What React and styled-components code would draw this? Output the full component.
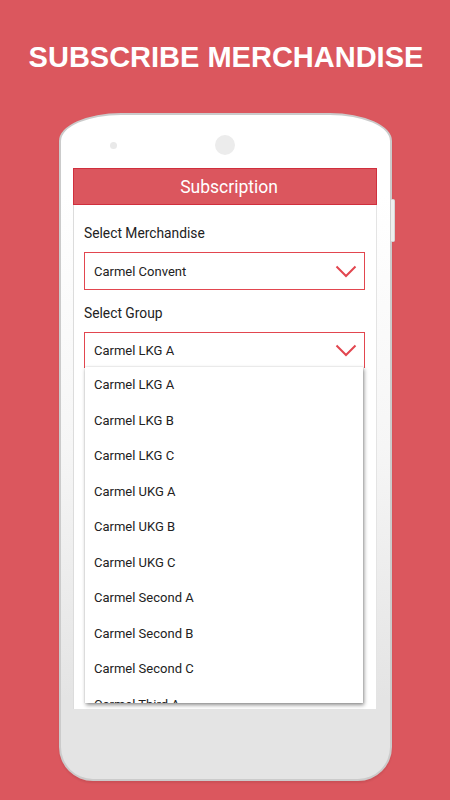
import React from "react";
import styled, { createGlobalStyle } from "styled-components";

const Global = createGlobalStyle`
  html, body { margin: 0; padding: 0; background: #db575e; }
  * { box-sizing: border-box; }
`;

const Page = styled.div`
  width: 450px;
  height: 800px;
  overflow: hidden;
  background: #db575e;
  display: flex;
  flex-direction: column;
  align-items: center;
`;

const Title = styled.h1`
  margin: 43px 0 0 2px;
  font-family: "Liberation Sans", Arial, sans-serif;
  font-weight: 700;
  font-size: 29px;
  line-height: 29px;
  color: #fff;
`;

const Phone = styled.div`
  position: relative;
  margin-top: 41px;
  margin-left: 1px;
  width: 333px;
  height: 668px;
  border: 2px solid #cbcbcb;
  border-radius: 62px 62px 34px 34px / 28px 28px 34px 34px;
  background: linear-gradient(to bottom, #ffffff 12%, #f6f6f6 50%, #e4e4e4 88%);
  box-shadow: 0 2px 2px rgba(0, 0, 0, 0.08);
  padding: 0 13px 0 12px;
  display: flex;
  flex-direction: column;
`;

const SideButton = styled.div`
  position: absolute;
  right: -5px;
  top: 84px;
  width: 4px;
  height: 43px;
  background: #eeeeee;
  border: 1px solid #d5d5d5;
  border-left: none;
  border-radius: 0 2px 2px 0;
`;

const TopBar = styled.div`
  height: 53px;
  padding-top: 7px;
  display: flex;
  align-items: center;
`;

const Sensor = styled.div`
  width: 7px;
  height: 7px;
  border-radius: 50%;
  background: #e9e9e9;
  margin-left: 37px;
`;

const Camera = styled.div`
  width: 20px;
  height: 20px;
  border-radius: 50%;
  background: #ececec;
  margin-left: 98px;
`;

const Screen = styled.div`
  width: 304px;
  height: 541px;
  background: #fff;
  border-left: 1px solid #dcdcdc;
  border-right: 1px solid #e4e4e4;
  display: flex;
  flex-direction: column;
`;

const Header = styled.div`
  height: 37px;
  margin: 0 -1px;
  padding-left: 8px;
  background: #db565e;
  border: 1px solid #d02f3d;
  display: flex;
  align-items: center;
  justify-content: center;
  font-family: Roboto, "Noto Sans", sans-serif;
  font-size: 17.5px;
  color: #fff;
`;

const Form = styled.div`
  padding: 20px 11px 0 10px;
  display: flex;
  flex-direction: column;
`;

const Label = styled.div`
  font-family: Roboto, "Noto Sans", sans-serif;
  font-size: 13.8px;
  line-height: 17px;
  color: #222;
  margin-top: ${(p) => p.$top || 0}px;
`;

const Select = styled.div`
  position: relative;
  margin-top: 10px;
  height: ${(p) => p.$h || 38}px;
  border: 1.5px solid #e2464f;
  border-bottom: ${(p) => (p.$open ? "none" : "1.5px solid #e2464f")};
  display: flex;
  align-items: center;
  justify-content: space-between;
  padding: 0 7px 0 9px;
  font-family: Roboto, "Noto Sans", sans-serif;
  font-size: 13px;
  color: #222;
`;

const Chevron = () => (
  <svg width="22" height="13" viewBox="0 0 22 13">
    <polyline
      points="1.5,1.5 11,11 20.5,1.5"
      fill="none"
      stroke="#e2464f"
      strokeWidth="2"
      strokeLinejoin="miter"
    />
  </svg>
);

const Dropdown = styled.div`
  position: absolute;
  top: 34px;
  left: 0px;
  width: 278px;
  height: 336px;
  overflow: hidden;
  background: #fff;
  box-shadow: 1px 2px 4px rgba(0, 0, 0, 0.45), 0 0 1px rgba(0, 0, 0, 0.2);
  z-index: 2;
`;

const Item = styled.div`
  height: 35.5px;
  display: flex;
  align-items: center;
  padding-left: 9px;
  font-family: Roboto, "Noto Sans", sans-serif;
  font-size: 13px;
  color: #222;
  white-space: nowrap;
`;

const groups = [
  "Carmel LKG A",
  "Carmel LKG B",
  "Carmel LKG C",
  "Carmel UKG A",
  "Carmel UKG B",
  "Carmel UKG C",
  "Carmel Second A",
  "Carmel Second B",
  "Carmel Second C",
  "Carmel Third  A",
];

export default function App() {
  return (
    <>
      <Global />
      <Page>
        <Title>SUBSCRIBE MERCHANDISE</Title>
        <Phone>
          <SideButton />
          <TopBar>
            <Sensor />
            <Camera />
          </TopBar>
          <Screen>
            <Header>Subscription</Header>
            <Form>
              <Label>Select Merchandise</Label>
              <Select>
                <span>Carmel Convent</span>
                <Chevron />
              </Select>
              <Label $top={15}>Select Group</Label>
              <Select $open $h={36}>
                <span>Carmel LKG A</span>
                <Chevron />
                <Dropdown>
                  {groups.map((g) => (
                    <Item key={g}>{g}</Item>
                  ))}
                </Dropdown>
              </Select>
            </Form>
          </Screen>
        </Phone>
      </Page>
    </>
  );
}
